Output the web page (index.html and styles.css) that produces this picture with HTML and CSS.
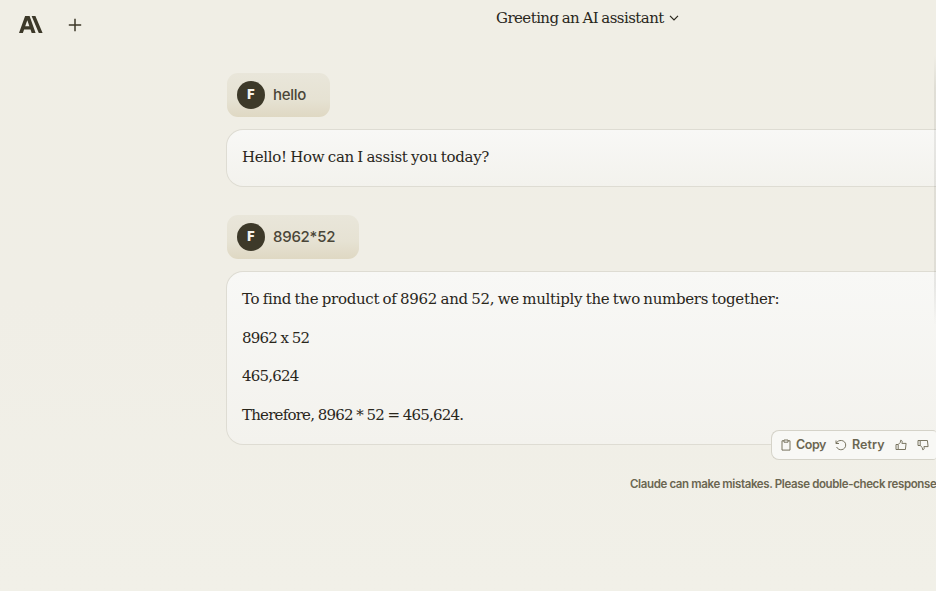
FILE: index.html
```
<!DOCTYPE html>
<html lang="en">
<head>
<meta charset="utf-8">
<title>Greeting an AI assistant</title>
<link rel="stylesheet" href="styles.css">
</head>
<body>
<header class="topbar">
  <div class="brand">
    <svg class="logo" width="24" height="17" viewBox="0 0 24 17" fill="currentColor"><path fill-rule="evenodd" d="M6.1 0h4.5l6 17h-3.9l-1.2-3.5H5.1L3.9 17H0zM8.3 4.3 6.2 10.3h4.2zM12.6 0h3.8l7.2 17h-3.8z"/></svg>
    <svg class="plus" width="14" height="14" viewBox="0 0 14 14" fill="none" stroke="currentColor" stroke-width="1.5"><path d="M7 .8v12.4M.8 7h12.4"/></svg>
  </div>
  <div class="title"><span>Greeting an AI assistant</span>
    <svg width="10" height="6" viewBox="0 0 10 6" fill="none" stroke="currentColor" stroke-width="1.2"><path d="M1 .8 5 4.8 9 .8"/></svg>
  </div>
</header>
<main class="chat">
  <div class="prompt"><span class="avatar">F</span><span class="prompt-text">hello</span></div>
  <section class="reply"><p>Hello! How can I assist you today?</p></section>
  <div class="prompt prompt-next"><span class="avatar">F</span><span class="prompt-text prompt-num">8962*52</span></div>
  <section class="reply reply-long">
    <p>To find the product of 8962 and 52, we multiply the two numbers together:</p>
    <p class="math">8962 x 52</p>
    <p class="math">465,624</p>
    <p class="math">Therefore, 8962 * 52 = 465,624.</p>
    <div class="actions">
      <svg width="10" height="12" viewBox="0 0 10 12" fill="none" stroke="currentColor" stroke-width=".9"><path d="M3 1.8H1v9.3h8V1.8H7M3 1h4v2.2H3z"/></svg>
      <span class="copy">Copy</span>
      <svg width="12" height="12" viewBox="0 0 12 12" fill="none" stroke="currentColor" stroke-width=".9"><path d="M1 1.5v3h3M1.2 4.4C3-.1 10.7.7 10.7 6c0 5.3-7.1 6.4-9.1 2"/></svg>
      <span class="retry">Retry</span>
      <svg width="12" height="12" viewBox="0 0 12 12" fill="none" stroke="currentColor" stroke-width=".9" stroke-linejoin="round"><path d="M1 5.5h2.2v5H1zM3.2 5.5 5.3 3.4l.3-2.1c1.6-.2 1.9 1.3 1.3 3.1h4.2l-.7 6.1H3.2"/></svg>
      <svg class="down" width="12" height="12" viewBox="0 0 12 12" fill="none" stroke="currentColor" stroke-width=".9" stroke-linejoin="round"><path d="M1 6.5h2.2v-5H1zM3.2 6.5l2.1 2.1.3 2.1c1.6.2 1.9-1.3 1.3-3.1h4.2l-.7-6.1H3.2"/></svg>
    </div>
  </section>
  <p class="notice">Claude can make mistakes. Please double-check response</p>
</main>
<div class="edge"></div>
</body>
</html>
```
FILE: styles.css
```
* { box-sizing: border-box; }
body {
  margin: 0;
  height: 591px;
  overflow: hidden;
  position: relative;
  background: linear-gradient(#f0eee5, #f0eee6 50%, #f1f0e8);
  color: #29261b;
  font-family: "DejaVu Serif", serif;
  font-size: 15px;
  letter-spacing: -.3px;
  word-spacing: -1px;
}
p { margin: 0; white-space: nowrap; }
svg { display: block; flex: none; }
.topbar { height: 73px; display: flex; align-items: flex-start; color: #3d3929; }
.brand { display: flex; width: 496px; padding: 16px 0 0 19px; gap: 25px; align-items: center; }
.title { display: flex; align-items: center; gap: 5px; padding-top: 7px; line-height: 22px; white-space: nowrap; color: #29261b; letter-spacing: -.56px; }
.chat { padding-left: 226px; width: 936px; }
.prompt {
  width: 103px;
  height: 44px;
  margin-left: 1px;
  border-radius: 11px;
  padding: 0 10px;
  display: flex;
  align-items: center;
  gap: 8px;
  background: linear-gradient(#e9e6da, #e6e2d3 60%, #dfd8c3);
}
.prompt-next { width: 132px; margin-top: 28px; }
.avatar {
  width: 28px;
  height: 28px;
  border-radius: 50%;
  background: #3d3929;
  color: #f5f3ed;
  font: 900 12.5px/28px Inter, sans-serif;
  letter-spacing: 0;
  text-align: center;
}
.prompt-text { font: 500 15px/24px Inter, sans-serif; color: #4a4638; font-feature-settings: "calt" 0; }
.prompt-num { letter-spacing: -.25px; }
.reply {
  height: 58px;
  margin-top: 12px;
  padding: 15px 15px;
  border: 1px solid #dedcd3;
  border-right: 0;
  border-radius: 17px 0 0 17px;
  background: linear-gradient(#f8f8f6, #f3f2ed);
  line-height: 24px;
}
.reply-long {
  height: 174px;
  position: relative;
  display: flex;
  flex-direction: column;
  gap: 14.5px;
}
.math { letter-spacing: -.78px; word-spacing: -.5px; }
.actions {
  position: absolute;
  left: 544px;
  top: 158px;
  width: 165px;
  height: 30px;
  display: flex;
  align-items: center;
  padding-left: 9px;
  border: 1px solid #d5d3c9;
  border-right: 0;
  border-radius: 8px 3px 3px 8px;
  background: #f8f8f5;
  color: #6b6651;
  font: 600 12.5px/20px Inter, sans-serif;
}
.copy { width: 30px; margin: 0 9px 0 5px; letter-spacing: -.45px; }
.retry { width: 34px; margin: 0 9px 0 5px; letter-spacing: .1px; }
.down { margin-left: 10px; }
.notice { margin: 29px 0 0 404px; font: 600 11.5px/20px Inter, sans-serif; color: #6b6651; letter-spacing: -.37px; word-spacing: 0; }
.edge {
  position: absolute;
  right: 0;
  top: 55px;
  width: 2px;
  height: 270px;
  background: linear-gradient(transparent, rgba(80, 80, 75, .1) 12%, rgba(80, 80, 75, .1) 85%, transparent);
}
```
